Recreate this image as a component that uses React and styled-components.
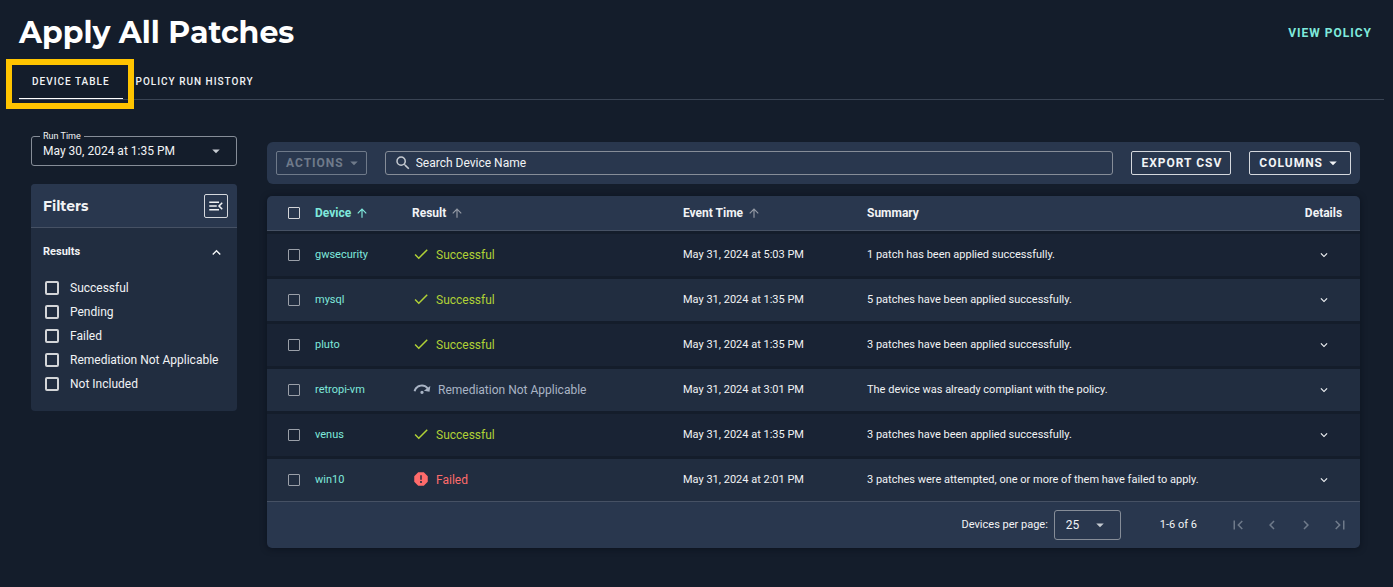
import React from "react";
import styled, { createGlobalStyle, css } from "styled-components";
import {
  MdArrowDropDown,
  MdArrowUpward,
  MdCheck,
  MdChevronLeft,
  MdChevronRight,
  MdExpandLess,
  MdExpandMore,
  MdFirstPage,
  MdLastPage,
  MdMenuOpen,
  MdReport,
  MdSearch,
} from "react-icons/md";

const color = {
  page: "#141d2b",
  panel: "#212d40",
  panelHead: "#29374e",
  rowDark: "#192334",
  line: "#465164",
  border: "#868d98",
  text: "#f1f3f5",
  muted: "#a9b4c5",
  disabled: "#6f7a8a",
  teal: "#7fe9dc",
  green: "#b0d136",
  red: "#ff6b6b",
  highlight: "#ffc400",
};

const GlobalStyle = createGlobalStyle`
  *, *::before, *::after { box-sizing: border-box; }
  html { background: ${color.page}; }
  body {
    margin: 0;
    color: ${color.text};
    font-family: Roboto, "Liberation Sans", sans-serif;
    font-size: 12px;
    line-height: 16px;
  }
  button, input, select { font: inherit; color: inherit; margin: 0; }
  svg { display: block; flex: none; }
`;

const Header = styled.header`
  display: flex;
  align-items: center;
  justify-content: space-between;
  height: 65px;
  padding: 0 21px 0 19px;
`;

const Title = styled.h1`
  margin: 0;
  color: #fff;
  font-family: Montserrat, Inter, sans-serif;
  font-size: 30px;
  font-weight: 700;
  line-height: 40px;
`;

const PolicyLink = styled.a`
  color: ${color.teal};
  font-weight: 700;
  letter-spacing: 1px;
  text-decoration: none;
`;

const Tabs = styled.nav`
  display: flex;
  margin: 0 9px 0 19px;
  border-bottom: 1px solid #3a4454;
`;

const Tab = styled.button`
  position: relative;
  height: 34px;
  padding: 0 13px;
  border: 0;
  border-bottom: 1px solid ${(p) => (p.$active ? "#fff" : "transparent")};
  background: none;
  font-size: 10px;
  font-weight: 500;
  letter-spacing: 1px;
`;

const Highlight = styled.span`
  position: absolute;
  inset: -6px -11px -11px -13px;
  border: 6px solid ${color.highlight};
  pointer-events: none;
`;

const Layout = styled.div`
  display: flex;
  align-items: flex-start;
  gap: 30px;
  padding: 36px 33px 39px 31px;
`;

const Sidebar = styled.aside`
  flex: 0 0 206px;
  display: flex;
  flex-direction: column;
  gap: 18px;
`;

const OutlinedField = styled.div`
  position: relative;
  display: flex;
  align-items: center;
  width: ${(p) => p.$width || "100%"};
  height: 30px;
  border: 1px solid ${color.border};
  border-radius: 3px;

  select {
    appearance: none;
    width: 100%;
    height: 100%;
    padding: 0 32px 0 11px;
    border: 0;
    background: none;
    outline: 0;
  }

  svg {
    position: absolute;
    right: 11px;
    color: #c5cad1;
    pointer-events: none;
  }
`;

const FloatingLabel = styled.label`
  position: absolute;
  top: -7px;
  left: 8px;
  padding: 0 3px;
  background: ${color.page};
  font-size: 9px;
  line-height: 12px;
`;

const FilterCard = styled.section`
  overflow: hidden;
  border-radius: 4px;
  background: ${color.panel};
`;

const FilterHead = styled.div`
  display: flex;
  align-items: center;
  justify-content: space-between;
  height: 44px;
  padding: 0 9px 0 12px;
  border-bottom: 1px solid ${color.line};
  background: ${color.panelHead};

  h2 {
    margin: 0;
    font-family: Montserrat, Inter, sans-serif;
    font-size: 14px;
    font-weight: 700;
  }
`;

const IconBox = styled.button`
  display: grid;
  place-items: center;
  width: 24px;
  height: 24px;
  padding: 0;
  border: 1px solid #d5d8dd;
  border-radius: 2px;
  background: none;
`;

const GroupToggle = styled.button`
  display: flex;
  align-items: center;
  justify-content: space-between;
  width: 100%;
  height: 48px;
  padding: 0 12px;
  border: 0;
  background: none;
  font-size: 11px;
  font-weight: 700;
`;

const FilterList = styled.div`
  display: flex;
  flex-direction: column;
  padding: 0 14px 15px;
`;

const FilterOption = styled.label`
  display: flex;
  align-items: center;
  gap: 11px;
  height: 24px;
`;

const CheckBox = styled.input.attrs({ type: "checkbox" })`
  appearance: none;
  display: block;
  flex: none;
  width: ${(p) => (p.$large ? 14 : 12)}px;
  height: ${(p) => (p.$large ? 14 : 12)}px;
  border: ${(p) => (p.$large ? 2 : 1)}px solid ${(p) => (p.$dim ? "#9a9fa8" : "#d3d5d8")};
  border-radius: ${(p) => (p.$large ? 2 : 1)}px;
`;

const Main = styled.main`
  flex: 1;
  min-width: 0;
  display: flex;
  flex-direction: column;
  gap: 12px;
  padding-top: 6px;
`;

const Toolbar = styled.div`
  display: flex;
  align-items: center;
  gap: 18px;
  height: 42px;
  padding: 0 9px;
  border-radius: 6px;
  background: ${color.panelHead};
`;

const ToolButton = styled.button`
  display: flex;
  align-items: center;
  gap: 1px;
  height: 24px;
  padding: 0 8px 0 9px;
  border: 1px solid #d5d8dd;
  border-radius: 2px;
  background: none;
  font-weight: 700;
  letter-spacing: 1px;
  white-space: nowrap;

  &:disabled {
    padding-right: 3px;
    border-color: ${color.disabled};
    color: ${color.disabled};
  }
`;

const SearchField = styled.label`
  flex: 1;
  display: flex;
  align-items: center;
  gap: 4px;
  height: 24px;
  padding: 0 8px;
  border: 1px solid ${color.border};
  border-radius: 3px;
  color: #c5cad1;

  input {
    flex: 1;
    min-width: 0;
    padding: 0;
    border: 0;
    background: none;
    outline: 0;
    color: ${color.text};
  }

  input::placeholder {
    color: ${color.text};
    opacity: 1;
  }
`;

const TableCard = styled.section`
  overflow: hidden;
  border-radius: 5px;
  background: ${color.panelHead};
  box-shadow: 0 1px 6px rgba(5, 10, 20, 0.5);
`;

const Table = styled.table`
  width: 100%;
  table-layout: fixed;
  border-collapse: separate;
  border-spacing: 0;
  text-align: left;
`;

const Col = styled.col`
  width: ${(p) => p.$w};
`;

const cell = css`
  padding: 0;
  white-space: nowrap;
  vertical-align: middle;

  &:first-child { padding-left: 21px; }
  &:last-child { text-align: center; }
`;

const HeadCell = styled.th`
  ${cell}
  height: 35px;
  border-bottom: 1px solid ${color.line};
  font-weight: 700;
  color: ${(p) => (p.$active ? color.teal : color.text)};
`;

const SortButton = styled.button`
  display: flex;
  align-items: center;
  gap: 4px;
  padding: 0;
  border: 0;
  background: none;
  color: inherit;
  font-weight: 700;

  svg { color: ${(p) => (p.$active ? color.teal : "#949aa5")}; }
`;

const Row = styled.tr`
  background: ${color.rowDark};
  &:nth-child(even) { background: ${color.panel}; }
`;

const Cell = styled.td`
  ${cell}
  height: 45px;
  border-top: 3px solid #141d2b;
  font-size: 11px;
`;

const DeviceLink = styled.a`
  color: ${color.teal};
  text-decoration: none;
`;

const Status = styled.span`
  display: flex;
  align-items: center;
  gap: 6px;
  color: ${(p) => p.$tone};
  font-size: 12px;

  svg { margin: -1px 0 1px; }
`;

const PlainButton = styled.button`
  display: inline-grid;
  place-items: center;
  padding: 0;
  border: 0;
  background: none;
  vertical-align: middle;

  &:disabled { color: ${color.disabled}; }
`;

const Pager = styled.footer`
  display: flex;
  align-items: center;
  justify-content: flex-end;
  height: 47px;
  padding-right: 11px;
  border-top: 1px solid ${color.line};
  font-size: 11px;
`;

const PageSize = styled.div`
  display: flex;
  align-items: center;
  gap: 6px;

  select { font-size: 12px; }
`;

const PageRange = styled.span`
  margin: 0 32px 0 39px;
`;

const PageButtons = styled.div`
  display: flex;
  gap: 16px;
`;

function SkipIcon() {
  return (
    <svg width="20" height="20" viewBox="0 0 24 24" fill="currentColor" aria-hidden="true">
      <path d="M12,14A2,2 0 0,1 14,16A2,2 0 0,1 12,18A2,2 0 0,1 10,16A2,2 0 0,1 12,14M22,8.3L21,15.2L14.2,14.2L17.5,11.6C16.2,9.9 14.2,8.9 12,8.9C8.1,8.9 5,11.5 4.3,15L2,14.5C2.9,9.9 7,6.5 12,6.5C15,6.5 17.7,7.9 19.4,10.2L22,8.3Z" />
    </svg>
  );
}

const statuses = {
  Successful: { tone: color.green, icon: <MdCheck size={18} /> },
  "Remediation Not Applicable": { tone: color.muted, icon: <SkipIcon /> },
  Failed: { tone: color.red, icon: <MdReport size={18} /> },
};

const filters = ["Successful", "Pending", "Failed", "Remediation Not Applicable", "Not Included"];

const devices = [
  ["gwsecurity", "Successful", "5:03 PM", "1 patch has been applied successfully."],
  ["mysql", "Successful", "1:35 PM", "5 patches have been applied successfully."],
  ["pluto", "Successful", "1:35 PM", "3 patches have been applied successfully."],
  ["retropi-vm", "Remediation Not Applicable", "3:01 PM", "The device was already compliant with the policy."],
  ["venus", "Successful", "1:35 PM", "3 patches have been applied successfully."],
  ["win10", "Failed", "2:01 PM", "3 patches were attempted, one or more of them have failed to apply."],
];

function SortHeader({ label, active }) {
  return (
    <HeadCell $active={active} scope="col">
      <SortButton $active={active}>
        {label}
        <MdArrowUpward size={14} />
      </SortButton>
    </HeadCell>
  );
}

export default function App() {
  return (
    <>
      <GlobalStyle />
      <Header>
        <Title>Apply All Patches</Title>
        <PolicyLink href="#policy">VIEW POLICY</PolicyLink>
      </Header>
      <Tabs>
        <Tab $active>
          DEVICE TABLE
          <Highlight />
        </Tab>
        <Tab>POLICY RUN HISTORY</Tab>
      </Tabs>
      <Layout>
        <Sidebar>
          <OutlinedField>
            <FloatingLabel htmlFor="run-time">Run Time</FloatingLabel>
            <select id="run-time">
              <option>May 30, 2024 at 1:35 PM</option>
            </select>
            <MdArrowDropDown size={18} />
          </OutlinedField>
          <FilterCard>
            <FilterHead>
              <h2>Filters</h2>
              <IconBox aria-label="Collapse filters">
                <MdMenuOpen size={18} />
              </IconBox>
            </FilterHead>
            <GroupToggle aria-expanded="true">
              Results
              <MdExpandLess size={17} />
            </GroupToggle>
            <FilterList>
              {filters.map((name) => (
                <FilterOption key={name}>
                  <CheckBox $large />
                  {name}
                </FilterOption>
              ))}
            </FilterList>
          </FilterCard>
        </Sidebar>
        <Main>
          <Toolbar>
            <ToolButton disabled>
              ACTIONS
              <MdArrowDropDown size={18} />
            </ToolButton>
            <SearchField>
              <MdSearch size={18} />
              <input type="text" placeholder="Search Device Name" aria-label="Search Device Name" />
            </SearchField>
            <ToolButton>EXPORT CSV</ToolButton>
            <ToolButton>
              COLUMNS
              <MdArrowDropDown size={18} />
            </ToolButton>
          </Toolbar>
          <TableCard>
            <Table>
              <colgroup>
                <Col $w="48px" />
                <Col $w="97px" />
                <Col $w="271px" />
                <Col $w="184px" />
                <Col />
                <Col $w="73px" />
              </colgroup>
              <thead>
                <tr>
                  <HeadCell scope="col">
                    <CheckBox aria-label="Select all devices" />
                  </HeadCell>
                  <SortHeader label="Device" active />
                  <SortHeader label="Result" />
                  <SortHeader label="Event Time" />
                  <HeadCell scope="col">Summary</HeadCell>
                  <HeadCell scope="col">Details</HeadCell>
                </tr>
              </thead>
              <tbody>
                {devices.map(([name, result, time, summary]) => (
                  <Row key={name}>
                    <Cell>
                      <CheckBox $dim aria-label={`Select ${name}`} />
                    </Cell>
                    <Cell>
                      <DeviceLink href={`#${name}`}>{name}</DeviceLink>
                    </Cell>
                    <Cell>
                      <Status $tone={statuses[result].tone}>
                        {statuses[result].icon}
                        {result}
                      </Status>
                    </Cell>
                    <Cell>May 31, 2024 at {time}</Cell>
                    <Cell>{summary}</Cell>
                    <Cell>
                      <PlainButton aria-label={`Show details of ${name}`}>
                        <MdExpandMore size={14} />
                      </PlainButton>
                    </Cell>
                  </Row>
                ))}
              </tbody>
            </Table>
            <Pager>
              <PageSize>
                <label htmlFor="page-size">Devices per page:</label>
                <OutlinedField $width="67px">
                  <select id="page-size">
                    <option>25</option>
                  </select>
                  <MdArrowDropDown size={18} />
                </OutlinedField>
              </PageSize>
              <PageRange>1-6 of 6</PageRange>
              <PageButtons>
                <PlainButton disabled aria-label="First page"><MdFirstPage size={18} /></PlainButton>
                <PlainButton disabled aria-label="Previous page"><MdChevronLeft size={18} /></PlainButton>
                <PlainButton disabled aria-label="Next page"><MdChevronRight size={18} /></PlainButton>
                <PlainButton disabled aria-label="Last page"><MdLastPage size={18} /></PlainButton>
              </PageButtons>
            </Pager>
          </TableCard>
        </Main>
      </Layout>
    </>
  );
}
